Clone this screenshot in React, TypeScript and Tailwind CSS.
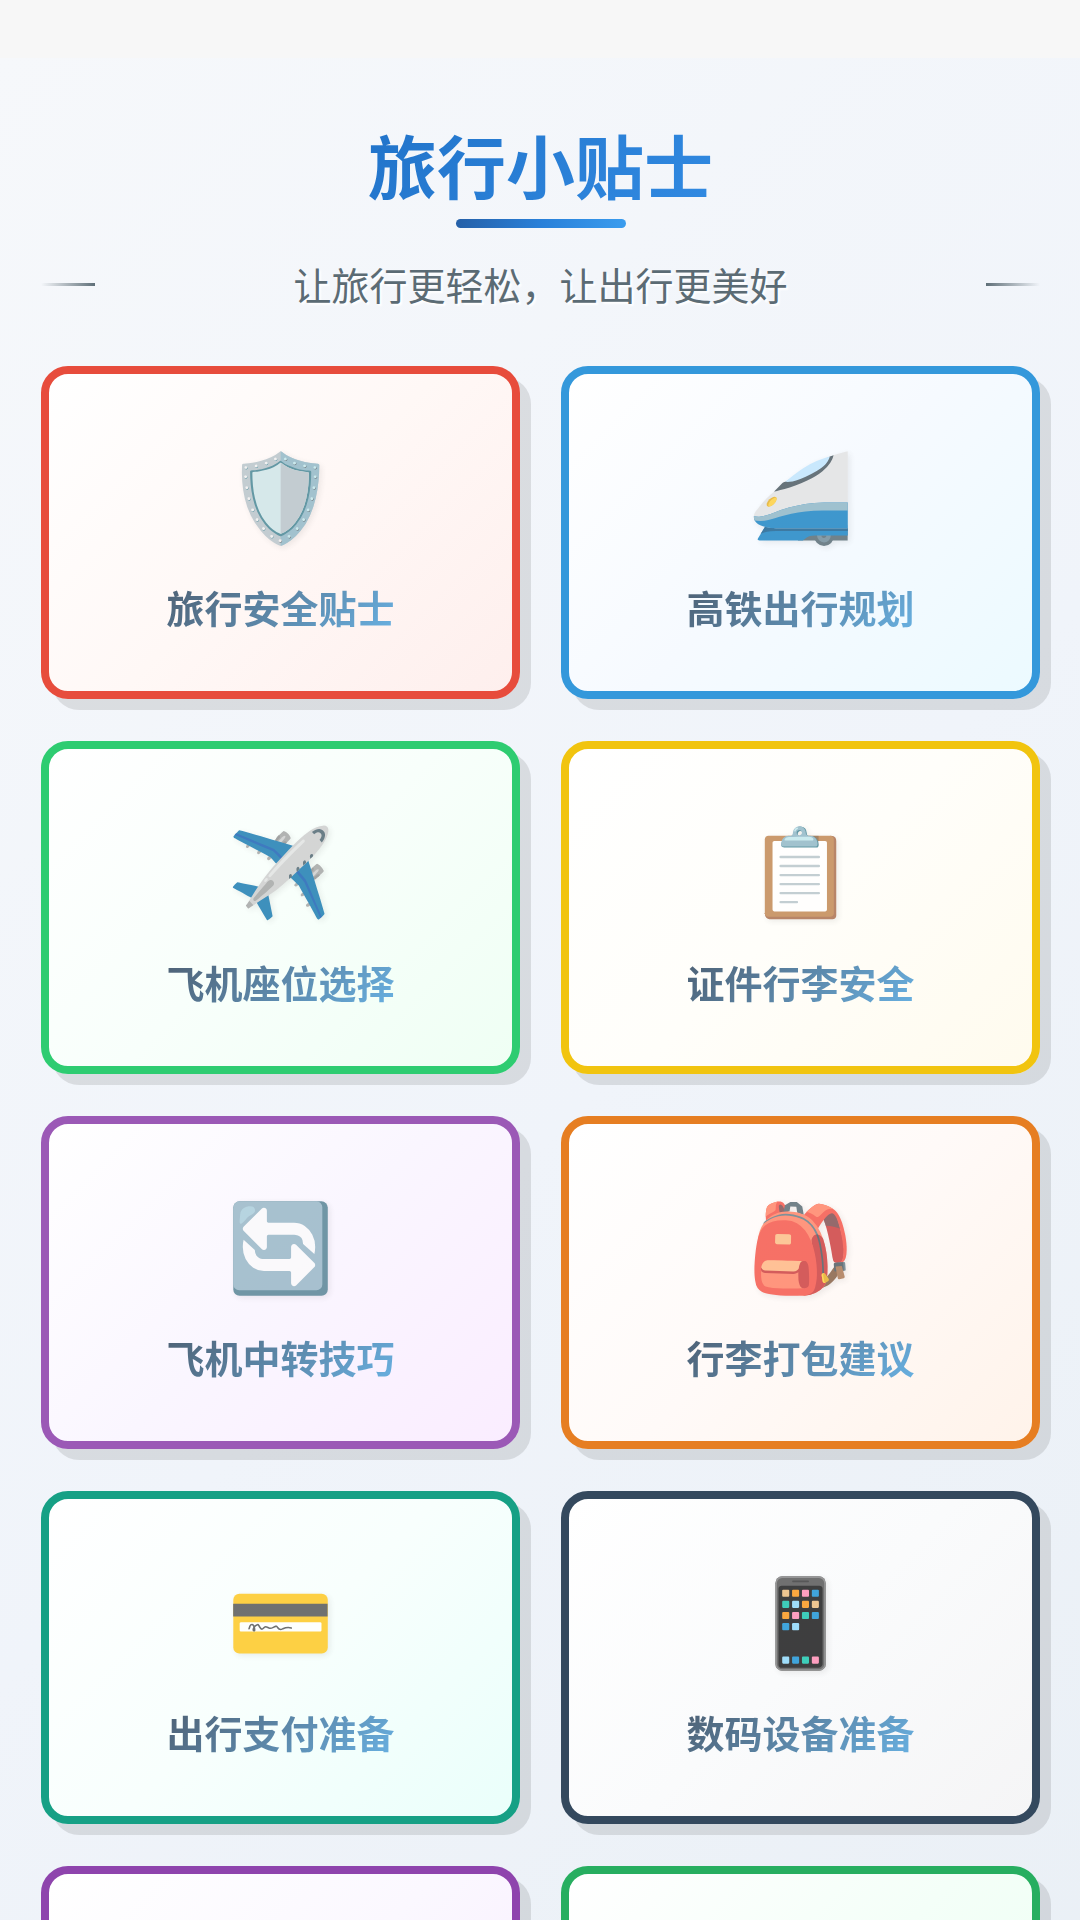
const tips = [
  { icon: "🛡️", title: "旅行安全贴士", card: "border-[#e74c3c] from-white via-[#fff8f6] to-[#feefed]" },
  { icon: "🚄", title: "高铁出行规划", card: "border-[#3498db] from-white via-[#f6faff] to-[#ecfaff]" },
  { icon: "✈️", title: "飞机座位选择", card: "border-[#2ecc71] from-white via-[#f8fffb] to-[#effff4]" },
  { icon: "📋", title: "证件行李安全", card: "border-[#f1c40f] from-white via-[#fffefa] to-[#fffbee]" },
  { icon: "🔄", title: "飞机中转技巧", card: "border-[#9b59b6] from-white via-[#faf6ff] to-[#faedff]" },
  { icon: "🎒", title: "行李打包建议", card: "border-[#e67e22] from-white via-[#fffaf8] to-[#fff3ea]" },
  { icon: "💳", title: "出行支付准备", card: "border-[#16a085] from-white via-[#f8fffd] to-[#eafffb]" },
  { icon: "📱", title: "数码设备准备", card: "border-[#34495e] from-white via-[#fafbfc] to-[#f5f5f6]" },
  { icon: "🏨", title: "酒店住宿选择", card: "border-[#8e44ad] from-white via-[#fbf8ff] to-[#f8ebff]" },
  { icon: "🍜", title: "当地美食推荐", card: "border-[#27ae60] from-white via-[#f4fff8] to-[#ebfff2]" },
];

function TipCard({ icon, title, card }: (typeof tips)[number]) {
  return (
    <a
      href="#"
      className={`flex flex-col items-center rounded-[27px] border-8 bg-linear-135 pt-[57px] pb-[54px] shadow-[11px_11px_0_rgba(0,0,0,0.1)] ${card}`}
    >
      <span className="text-[86px] leading-[120px] opacity-75 drop-shadow-[2px_2px_3px_rgba(0,0,0,0.1)]">
        {icon}
      </span>
      <h2 className="mt-[26px] bg-linear-135 from-[#4d5f72] to-[#68b2e4] bg-clip-text text-[38px] leading-[60px] font-bold text-transparent">
        {title}
      </h2>
    </a>
  );
}

export default function App() {
  return (
    <div className="bg-[#f7f7f7] pt-[58px] font-['Noto_Sans_CJK_SC',sans-serif]">
      <main className="min-h-screen bg-linear-135 from-[#f6f8fb] via-[#f0f4fa] to-[#e9eff5] pt-14 pr-10 pb-10 pl-[41px]">
        <header className="flex flex-col items-center">
          <h1 className="bg-linear-135 from-[#2173c9] to-[#318ae2] bg-clip-text text-[69px] leading-[100px] font-bold text-transparent">
            旅行小贴士
          </h1>
          <div className="mt-[5px] h-[9px] w-[170px] rounded-full bg-linear-to-r from-[#2560a8] via-[#2980d9] to-[#3a9cee]" />
          <div className="mt-[26px] flex w-full items-center justify-between">
            <span className="h-[3px] w-[54px] bg-linear-to-r from-transparent to-[#5f6f78]" />
            <p className="text-[38px] leading-[60px] text-[#5b6b74] text-shadow-[2px_2px_2px_#ffffff]">
              让旅行更轻松，让出行更美好
            </p>
            <span className="h-[3px] w-[54px] bg-linear-to-r from-[#5f6f78] to-transparent" />
          </div>
        </header>

        <section className="mt-[52px] grid grid-cols-2 gap-x-[41px] gap-y-[42px]">
          {tips.map((tip) => (
            <TipCard key={tip.title} {...tip} />
          ))}
        </section>
      </main>
    </div>
  );
}
